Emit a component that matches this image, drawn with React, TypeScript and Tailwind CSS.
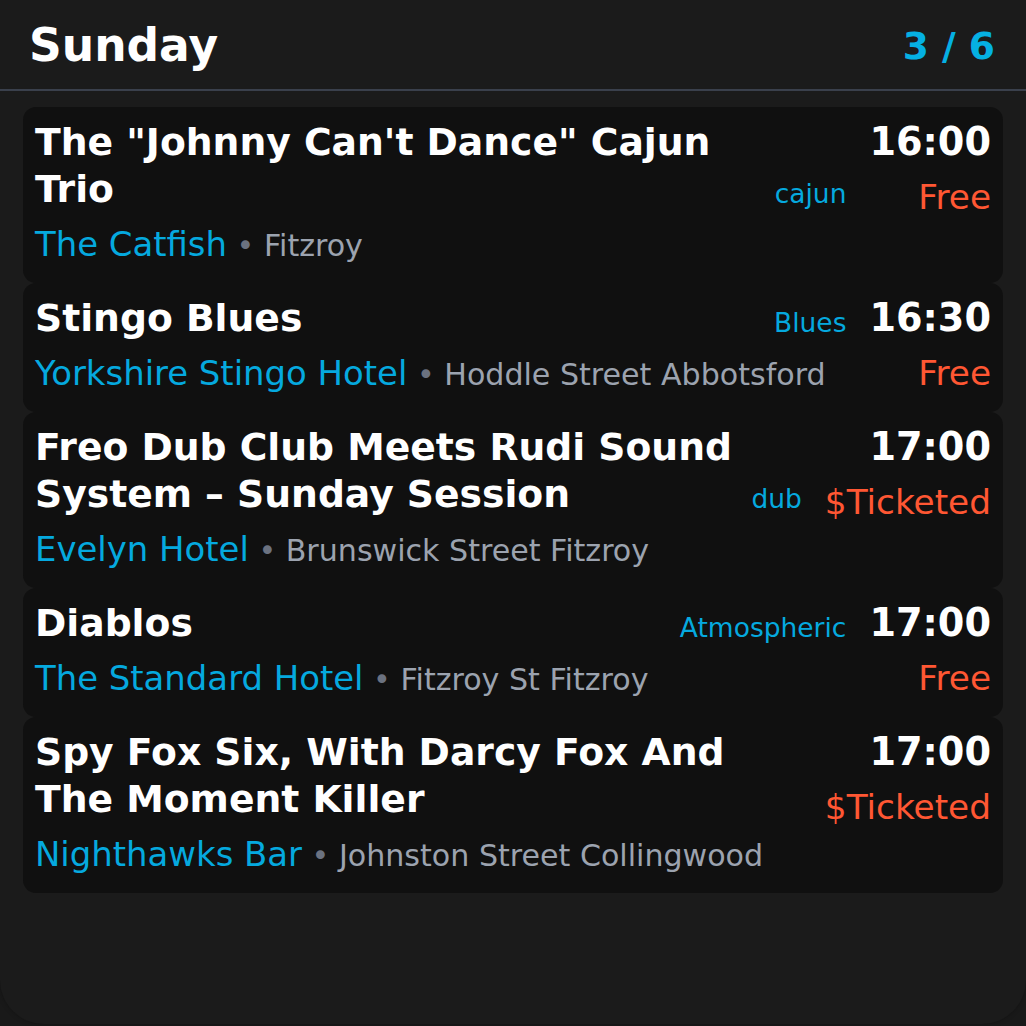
type Gig = {
  title: string;
  venue: string;
  place: string;
  genre?: string;
  time: string;
  price: string;
};

const gigs: Gig[] = [
  {
    title: 'The "Johnny Can\'t Dance" Cajun Trio',
    venue: "The Catfish",
    place: "Fitzroy",
    genre: "cajun",
    time: "16:00",
    price: "Free",
  },
  {
    title: "Stingo Blues",
    venue: "Yorkshire Stingo Hotel",
    place: "Hoddle Street Abbotsford",
    genre: "Blues",
    time: "16:30",
    price: "Free",
  },
  {
    title: "Freo Dub Club Meets Rudi Sound System – Sunday Session",
    venue: "Evelyn Hotel",
    place: "Brunswick Street Fitzroy",
    genre: "dub",
    time: "17:00",
    price: "$Ticketed",
  },
  {
    title: "Diablos",
    venue: "The Standard Hotel",
    place: "Fitzroy St Fitzroy",
    genre: "Atmospheric",
    time: "17:00",
    price: "Free",
  },
  {
    title: "Spy Fox Six, With Darcy Fox And The Moment Killer",
    venue: "Nighthawks Bar",
    place: "Johnston Street Collingwood",
    time: "17:00",
    price: "$Ticketed",
  },
];

const GigCard = ({ gig }: { gig: Gig }) => (
  <div className="flex gap-[23px] rounded-[13px] bg-[#101010] px-[12px] pt-[12px] pb-[13px]">
    <div className="flex min-w-0 flex-1 flex-col gap-[7px]">
      <div className="flex items-end gap-[14px]">
        <div className="min-w-0 flex-1 text-[37.7px] font-bold leading-[47px] text-white">
          {gig.title}
        </div>
        {gig.genre && (
          <div className="shrink-0 text-[26.5px] leading-[39px] text-[#05a9df]">
            {gig.genre}
          </div>
        )}
      </div>
      <div className="h-[50px] text-[33.9px] leading-[50px]">
        <span className="text-[#05a9df]">{gig.venue}</span>
        <span className="text-[30.1px] leading-none text-[#6b7280]"> • </span>
        <span className="text-[30.1px] leading-none text-[#9ca3af]">
          {gig.place}
        </span>
      </div>
    </div>
    <div className="flex shrink-0 flex-col items-end gap-[6px]">
      <div className="text-[38.2px] font-bold leading-[47px] text-white">
        {gig.time}
      </div>
      <div className="text-[34.3px] leading-[50px] text-[#ff5733]">
        {gig.price}
      </div>
    </div>
  </div>
);

export default function App() {
  return (
    <div
      className="h-[1026px] w-full overflow-hidden bg-[#191919]"
      style={{ fontFamily: '"DejaVu Sans", sans-serif' }}
    >
      <div className="h-[1024px] w-full rounded-b-[44px] bg-[#1b1b1b] shadow-[0_0_5px_rgba(0,0,0,0.25)]">
        <div className="flex items-center justify-between border-b-2 border-[#3a404c] pl-[29px] pr-[31px] pt-[19px] pb-[16px]">
          <h1 className="text-[45.5px] font-bold leading-[54px] text-white">
            Sunday
          </h1>
          <div className="text-[37.6px] font-bold leading-[54px] text-[#05b0e3]">
            3 / 6
          </div>
        </div>
        <div className="flex flex-col px-[23px] pt-[16px]">
          {gigs.map((gig, i) => (
            <GigCard key={i} gig={gig} />
          ))}
        </div>
      </div>
    </div>
  );
}
